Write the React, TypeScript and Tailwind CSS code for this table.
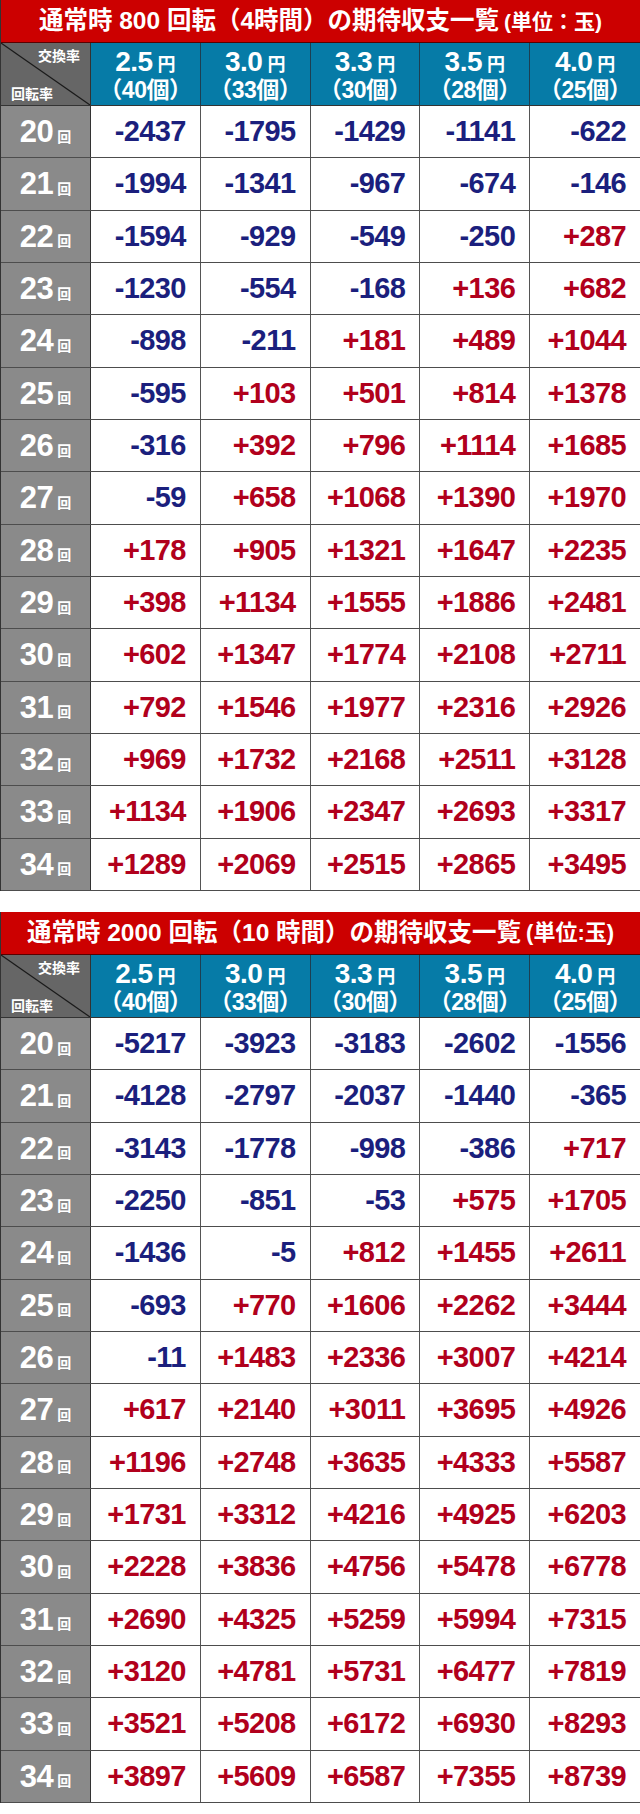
import React from 'react';

const FONT = "font-['Liberation_Sans','Noto_Sans_CJK_JP',sans-serif]";

const rates = [
  { yen: '2.5', count: '40' },
  { yen: '3.0', count: '33' },
  { yen: '3.3', count: '30' },
  { yen: '3.5', count: '28' },
  { yen: '4.0', count: '25' },
];

const spins = [20, 21, 22, 23, 24, 25, 26, 27, 28, 29, 30, 31, 32, 33, 34];

const table800 = [
  [-2437, -1795, -1429, -1141, -622],
  [-1994, -1341, -967, -674, -146],
  [-1594, -929, -549, -250, 287],
  [-1230, -554, -168, 136, 682],
  [-898, -211, 181, 489, 1044],
  [-595, 103, 501, 814, 1378],
  [-316, 392, 796, 1114, 1685],
  [-59, 658, 1068, 1390, 1970],
  [178, 905, 1321, 1647, 2235],
  [398, 1134, 1555, 1886, 2481],
  [602, 1347, 1774, 2108, 2711],
  [792, 1546, 1977, 2316, 2926],
  [969, 1732, 2168, 2511, 3128],
  [1134, 1906, 2347, 2693, 3317],
  [1289, 2069, 2515, 2865, 3495],
];

const table2000 = [
  [-5217, -3923, -3183, -2602, -1556],
  [-4128, -2797, -2037, -1440, -365],
  [-3143, -1778, -998, -386, 717],
  [-2250, -851, -53, 575, 1705],
  [-1436, -5, 812, 1455, 2611],
  [-693, 770, 1606, 2262, 3444],
  [-11, 1483, 2336, 3007, 4214],
  [617, 2140, 3011, 3695, 4926],
  [1196, 2748, 3635, 4333, 5587],
  [1731, 3312, 4216, 4925, 6203],
  [2228, 3836, 4756, 5478, 6778],
  [2690, 4325, 5259, 5994, 7315],
  [3120, 4781, 5731, 6477, 7819],
  [3521, 5208, 6172, 6930, 8293],
  [3897, 5609, 6587, 7355, 8739],
];

function HeaderCorner() {
  return (
    <div className="relative flex flex-col justify-between bg-[#666666] border-r border-[#333] px-[10px] pt-[5px] pb-[3px]">
      <svg className="absolute inset-0 w-full h-full" preserveAspectRatio="none" viewBox="0 0 100 100">
        <line x1="0" y1="0" x2="100" y2="100" stroke="#1a1a1a" strokeWidth="1.2" vectorEffect="non-scaling-stroke" />
      </svg>
      <span className="relative self-end text-[14px] font-bold leading-[16px] text-white">交換率</span>
      <span className="relative self-start text-[14px] font-bold leading-[16px] text-white">回転率</span>
    </div>
  );
}

function RateTable({
  title,
  unit,
  unitClass,
  rows,
  className,
}: {
  title: string;
  unit: string;
  unitClass: string;
  rows: number[][];
  className?: string;
}) {
  return (
    <div className={`border-l border-[#333] ${className ?? ''}`}>
      <div className="flex h-[43px] items-center justify-center bg-[#cc0000] border-b border-[#5a0000] text-white font-bold">
        <span className="text-[24.5px] leading-none">{title}</span>
        <span className={`ml-[5px] leading-none ${unitClass}`}>{unit}</span>
      </div>

      <div className="grid h-[63px] grid-cols-[90px_repeat(5,1fr)] border-b border-[#333]">
        <HeaderCorner />
        {rates.map((r) => (
          <div
            key={r.yen}
            className="flex flex-col items-center justify-center bg-[#067ba7] border-r border-[#1d3f52] last:border-r-0 text-white font-bold"
          >
            <div className="flex items-baseline leading-none mt-[1px]">
              <span className="text-[28px] tracking-[-0.5px]">{r.yen}</span>
              <span className="ml-[5px] text-[18px]">円</span>
            </div>
            <div className="mt-[3px] text-[23px] leading-none tracking-[-0.5px]">（{r.count}個）</div>
          </div>
        ))}
      </div>

      <div className="grid h-[785px] grid-rows-15">
        {rows.map((vals, i) => (
          <div key={spins[i]} className="grid grid-cols-[90px_repeat(5,1fr)] border-b border-[#4d4d4d]">
            <div className="flex items-center justify-center bg-[#8a8a8a] border-r border-[#333] text-white font-bold">
              <span className="text-[31px] leading-none tracking-[-0.5px]">{spins[i]}</span>
              <span className="ml-[4px] mt-[10px] text-[14px] leading-none">回</span>
            </div>
            {vals.map((v, j) => (
              <div
                key={j}
                className={`flex items-center justify-end bg-white pr-[14px] border-r border-[#555] last:border-r-0 text-[29px] font-bold leading-none tracking-[-0.6px] ${
                  v < 0 ? 'text-[#1b1f7d]' : 'text-[#b1001c]'
                }`}
              >
                {v < 0 ? `-${Math.abs(v)}` : `+${v}`}
              </div>
            ))}
          </div>
        ))}
      </div>
    </div>
  );
}

export default function App() {
  return (
    <div className={`w-[640px] bg-white pb-[12px] ${FONT}`}>
      <RateTable
        title="通常時 800 回転（4時間）の期待収支一覧"
        unit="(単位：玉)"
        unitClass="text-[21px]"
        rows={table800}
      />
      <RateTable
        className="mt-[21px]"
        title="通常時 2000 回転（10 時間）の期待収支一覧"
        unit="(単位:玉)"
        unitClass="text-[22px]"
        rows={table2000}
      />
    </div>
  );
}
